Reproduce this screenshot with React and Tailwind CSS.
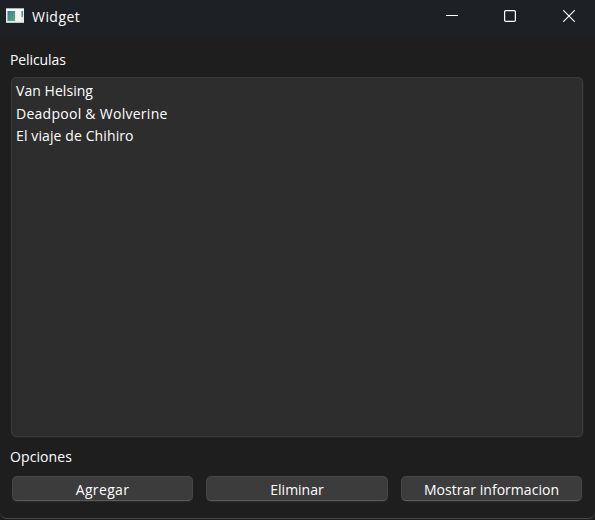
const movies = [
  { title: 'Van Helsing', style: 'h-[23px] tracking-[0.05px]' },
  { title: 'Deadpool & Wolverine', style: 'h-[22px] tracking-[0.27px]' },
  { title: 'El viaje de Chihiro', style: 'h-[22px] tracking-[0.11px]' },
];

function TitleBar() {
  return (
    <header className="flex h-[35px] items-center bg-[#1d2125]">
      <svg className="ml-[6px] -mt-[4px] shrink-0" width="18" height="15" viewBox="0 0 18 15">
        <defs>
          <linearGradient id="pane" x1="0" y1="0" x2="1" y2="1">
            <stop offset="0" stopColor="#377b94" />
            <stop offset="1" stopColor="#5dab80" />
          </linearGradient>
        </defs>
        <rect width="18" height="15" fill="#e9eaeb" />
        <rect width="18" height="1" fill="#aab0b3" />
        <rect y="1" width="18" height="2" fill="#fafafa" />
        <rect x="1.5" y="3" width="7.5" height="10" fill="url(#pane)" />
        <rect x="10" y="3" width="5" height="10" fill="#f3f3f3" />
        <rect x="15.5" y="3" width="1.5" height="6" fill="url(#pane)" />
        <rect y="14" width="18" height="1" fill="#c6c9ca" />
      </svg>
      <h1 className="-mt-px ml-2 grow text-[14px] leading-5 tracking-[0.45px]">Widget</h1>
      <div className="-mt-[3px] mr-5 flex items-center">
        <svg className="mr-[46px]" width="12" height="12" viewBox="0 0 12 12">
          <path d="M0 5.5h12" stroke="#fff" />
        </svg>
        <svg className="mr-[47px]" width="12" height="12" viewBox="0 0 12 12" fill="none">
          <rect x="0.6" y="0.6" width="10.8" height="10.8" rx="1.2" stroke="#fff" strokeWidth="1.2" />
        </svg>
        <svg width="12" height="12" viewBox="0 0 12 12">
          <path d="M0.3 0.3l11.4 11.4M11.7 0.3L0.3 11.7" stroke="#fff" strokeWidth="1.15" />
        </svg>
      </div>
    </header>
  );
}

function Button({ children, textStyle }) {
  return (
    <button className="flex h-[25px] items-center justify-center rounded-[5px] border border-[#474747] border-b-[#5b5b5b] bg-[#3c3c3c] text-[14px] leading-5 shadow-[0_1px_0_#2b2b2b]">
      <span className={textStyle}>{children}</span>
    </button>
  );
}

export default function App() {
  return (
    <div className="h-[520px] w-[595px] overflow-hidden bg-[#1e1e1e] font-['Open_Sans','Noto_Sans',sans-serif] text-[14px] leading-5 text-white">
      <div className="flex h-[519px] flex-col rounded-b-[7px] border-b border-[#474747]">
        <TitleBar />
        <main className="flex grow flex-col">
          <h2 className="mt-[15px] ml-[10px] h-5 tracking-[-0.1px]">Peliculas</h2>
          <ul className="mt-[7px] ml-[11px] h-[360px] w-[572px] rounded-[5px] border border-[#3b3b3b] bg-[#2d2d2d] pt-[3px] pl-1 shadow-[1px_1px_0_#262626]">
            {movies.map((m) => (
              <li key={m.title} className={m.style}>{m.title}</li>
            ))}
          </ul>
          <h2 className="mt-[10px] ml-[10px] h-5 tracking-[0.1px]">Opciones</h2>
          <div className="mt-[9px] ml-3 grid w-[570px] grid-cols-[181px_182px_181px] gap-[13px]">
            <Button textStyle="pt-[3px] tracking-[0.35px]">Agregar</Button>
            <Button textStyle="pt-[3px]">Eliminar</Button>
            <Button textStyle="pt-[3px] tracking-[0.03px]">Mostrar informacion</Button>
          </div>
        </main>
      </div>
    </div>
  );
}
